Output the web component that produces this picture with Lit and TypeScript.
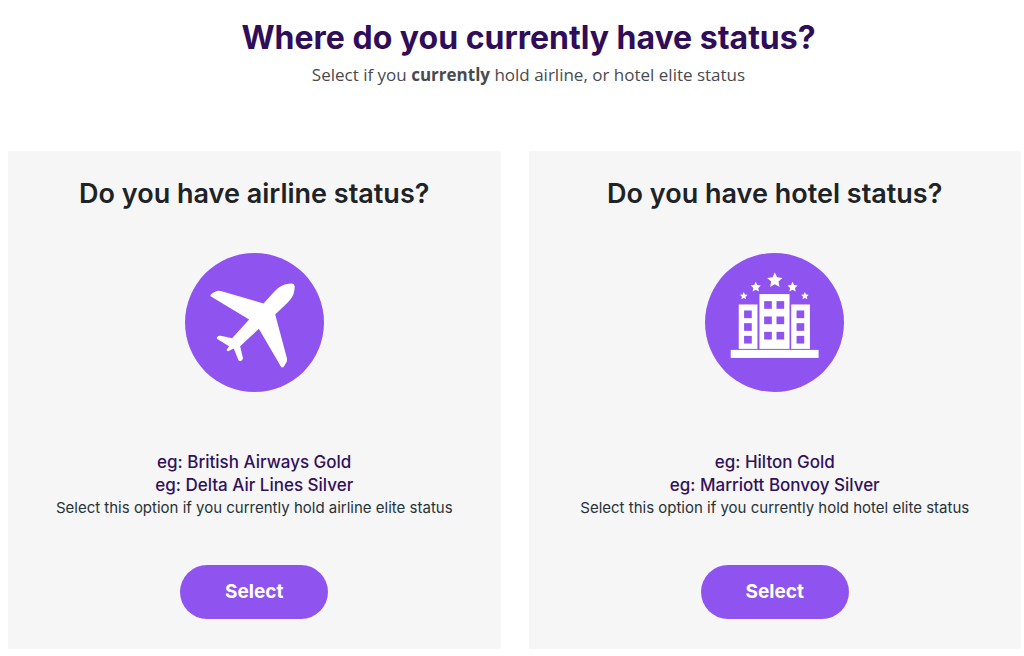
import { LitElement, html, css, svg } from "lit";
import { customElement, property } from "lit/decorators.js";

const star = (cx: number, cy: number, r: number) => {
  const points = Array.from({ length: 10 }, (_, i) => {
    const radius = i % 2 ? r * 0.48 : r;
    const angle = (Math.PI / 5) * i - Math.PI / 2;
    return `${(cx + radius * Math.cos(angle)).toFixed(1)},${(cy + radius * Math.sin(angle)).toFixed(1)}`;
  }).join(" ");
  return svg`<polygon points=${points}></polygon>`;
};

const windowsAt = (columns: number[], rows: number[]) =>
  columns.flatMap((x) =>
    rows.map((y) => svg`<rect class="window" x=${x} y=${y} width="23" height="23"></rect>`)
  );

const airlineIcon = html`
  <svg class="icon" viewBox="0 0 416 416" aria-hidden="true">
    <circle class="disc" cx="208" cy="208" r="208"></circle>
    <path
      d="M76 127Q78 121 92 115Q98 112 107 114L235 151L269 114Q287 94 310 92Q323 90 326 94Q330 99 327 113Q325 130 309 147L270 184L305 315Q306 321 304 326L296 340Q291 346 286 338L221 227L165 279L173 313Q175 318 168 323Q161 325 159 319L146 286L129 294Q124 293 125 289L132 279L99 259Q93 256 96 252Q99 247 107 248L141 255L192 199L79 131Q75 129 76 127Z"
    ></path>
  </svg>
`;

const hotelIcon = html`
  <svg class="icon" viewBox="0 0 416 416" aria-hidden="true">
    <circle class="disc" cx="208" cy="208" r="208"></circle>
    ${star(116, 129, 12)} ${star(152, 102, 16)} ${star(209, 82, 24)}
    ${star(262, 102, 16)} ${star(299, 129, 12)}
    <rect x="101" y="154" width="56" height="133"></rect>
    <rect x="163" y="123" width="90" height="164"></rect>
    <rect x="258" y="154" width="56" height="133"></rect>
    <rect x="77" y="290" width="263" height="24"></rect>
    ${windowsAt([117, 274], [172, 210, 248])}
    ${windowsAt([177, 214], [144, 190, 236])}
  </svg>
`;

@customElement("status-card")
class StatusCard extends LitElement {
  @property() kind: "airline" | "hotel" = "airline";
  @property({ attribute: false }) examples: string[] = [];

  static styles = css`
    :host {
      display: flex;
      flex-direction: column;
      align-items: center;
      padding: 25px 16px 30px;
      background: #f6f6f6;
      text-align: center;
    }
    .title {
      margin: 0;
      color: #202326;
      font-size: 27px;
      font-weight: 600;
      line-height: 36px;
    }
    .icon {
      display: block;
      width: 139px;
      height: 139px;
      margin: 41px 0 59px;
      fill: #fff;
    }
    .disc,
    .window {
      fill: #8f54ef;
    }
    .examples {
      margin: 0;
      padding: 0;
      list-style: none;
      color: #31115b;
      font-size: 17px;
      font-weight: 500;
      line-height: 23px;
    }
    .note {
      margin: 0;
      color: #263238;
      font-size: 15px;
      line-height: 22px;
    }
    .select {
      margin: 46px 0 0;
      padding: 15px 45px;
      border: 0;
      border-radius: 27px;
      background: #8f54ef;
      color: #fff;
      font-family: inherit;
      font-size: 19px;
      font-weight: 700;
      line-height: 24px;
      cursor: pointer;
    }
  `;

  render() {
    return html`
      <h2 class="title">Do you have ${this.kind} status?</h2>
      ${this.kind === "airline" ? airlineIcon : hotelIcon}
      <ul class="examples">
        ${this.examples.map((name) => html`<li>eg: ${name}</li>`)}
      </ul>
      <p class="note">Select this option if you currently hold ${this.kind} elite status</p>
      <button class="select" type="button">Select</button>
    `;
  }
}

@customElement("app-root")
class AppRoot extends LitElement {
  static styles = css`
    :host {
      display: block;
      background: #fff;
      font-family: Inter, "Liberation Sans", sans-serif;
    }
    .page {
      padding: 16px 3px 7px 8px;
    }
    .intro {
      margin: 0 0 64px;
      padding-left: 28px;
      text-align: center;
    }
    .heading {
      margin: 0;
      color: #2f0d59;
      font-size: 32px;
      font-weight: 700;
      line-height: 44px;
    }
    .lead {
      margin: 3px 0 0;
      color: #494a4f;
      font-family: "Open Sans", sans-serif;
      font-size: 17px;
      line-height: 24px;
    }
    .cards {
      display: grid;
      grid-template-columns: 1fr 1fr;
      gap: 28px;
    }
  `;

  render() {
    return html`
      <main class="page">
        <header class="intro">
          <h1 class="heading">Where do you currently have status?</h1>
          <p class="lead">
            Select if you <strong>currently</strong> hold airline, or hotel elite status
          </p>
        </header>
        <div class="cards">
          <status-card
            kind="airline"
            .examples=${["British Airways Gold", "Delta Air Lines Silver"]}
          ></status-card>
          <status-card
            kind="hotel"
            .examples=${["Hilton Gold", "Marriott Bonvoy Silver"]}
          ></status-card>
        </div>
      </main>
    `;
  }
}
